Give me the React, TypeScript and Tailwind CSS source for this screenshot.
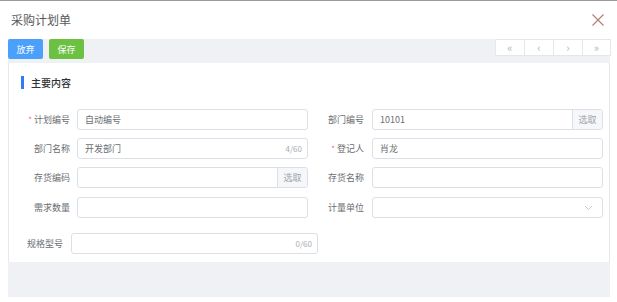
import React from "react";

const font = { fontFamily: '"Noto Sans CJK SC", "Noto Sans", sans-serif' };

function Label({ text, req, w }: { text: string; req?: boolean; w: string }) {
  return (
    <div className={`${w} shrink-0 flex items-center justify-end text-[9px] text-[#6b6d72] leading-none`}>
      {req && <span className="text-[#f56c6c] text-[8px] mr-[2px]">*</span>}
      {text}
    </div>
  );
}

function Input({ value, count, append, select, w }: { value?: string; count?: string; append?: boolean; select?: boolean; w: string }) {
  return (
    <div className={`${w} h-[21px] shrink-0 flex border border-[#dcdfe6] rounded-[3px] bg-white overflow-hidden`}>
      <div className="flex-1 flex items-center pl-[7px] pr-[5px] text-[9px] text-[#6b6d72] leading-none">
        <span className="flex-1">{value}</span>
        {count && <span className="text-[8px] text-[#a8abb2]">{count}</span>}
        {select && (
          <svg width="9" height="6" viewBox="0 0 9 6" className="mr-[4px]">
            <path d="M1 1 L4.5 4.5 L8 1" fill="none" stroke="#c0c4cc" strokeWidth="0.9" />
          </svg>
        )}
      </div>
      {append && (
        <div className="w-[30px] border-l border-[#dcdfe6] bg-[#f5f7fa] flex items-center justify-center text-[9px] text-[#a0a3a8] leading-none">
          选取
        </div>
      )}
    </div>
  );
}

function Pager({ children, last }: { children: React.ReactNode; last?: boolean }) {
  return (
    <div className={`w-[29px] h-[17px] bg-white border-t border-b border-l ${last ? "border-r" : ""} border-[#e4e7ed] flex items-center justify-center text-[11px] text-[#b0b3b8] leading-none pb-[1px]`}>
      {children}
    </div>
  );
}

export default function App() {
  return (
    <div className="w-[617px] h-[302px] bg-white border-t border-[#9a9a9a] overflow-hidden" style={font}>
      <div className="h-[38px] flex items-center justify-between pl-[11px] pr-[13px]">
        <span className="text-[12px] text-[#585858] leading-none">采购计划单</span>
        <svg width="12" height="12" viewBox="0 0 12 12">
          <path d="M0.5 0.5 L11.5 11.5 M11.5 0.5 L0.5 11.5" stroke="#b87c7a" strokeWidth="1.2" />
        </svg>
      </div>
      <div className="ml-[8px] w-[602px] bg-[#f0f1f5]">
        <div className="h-[24px] flex items-start justify-between">
          <div className="flex gap-[6px]">
            <div className="w-[35px] h-[20px] rounded-[2px] bg-[#4aa0fb] text-white text-[9px] flex items-center justify-center leading-none">放弃</div>
            <div className="w-[35px] h-[20px] rounded-[2px] bg-[#6cc142] text-white text-[9px] flex items-center justify-center leading-none">保存</div>
          </div>
          <div className="flex mr-[-1px]">
            <Pager>«</Pager>
            <Pager>‹</Pager>
            <Pager>›</Pager>
            <Pager last>»</Pager>
          </div>
        </div>
        <div className="h-[199px] bg-white border-l border-r border-[#e8e8ec] pt-[13px]">
          <div className="flex items-center pl-[12px] h-[13px]">
            <div className="w-[3px] h-[13px] bg-[#2f7cf6]" />
            <span className="ml-[7px] text-[10px] text-[#303133] font-medium leading-none">主要内容</span>
          </div>
          <div className="mt-[20px] flex">
            <Label w="w-[61px]" text="计划编号" req />
            <div className="w-[7px]" />
            <Input w="w-[231px]" value="自动编号" />
            <Label w="w-[56px]" text="部门编号" />
            <div className="w-[8px]" />
            <Input w="w-[231px]" value="10101" append />
          </div>
          <div className="mt-[8px] flex">
            <Label w="w-[61px]" text="部门名称" />
            <div className="w-[7px]" />
            <Input w="w-[231px]" value="开发部门" count="4/60" />
            <Label w="w-[56px]" text="登记人" req />
            <div className="w-[8px]" />
            <Input w="w-[231px]" value="肖龙" />
          </div>
          <div className="mt-[8px] flex">
            <Label w="w-[61px]" text="存货编码" />
            <div className="w-[7px]" />
            <Input w="w-[231px]" append />
            <Label w="w-[56px]" text="存货名称" />
            <div className="w-[8px]" />
            <Input w="w-[231px]" />
          </div>
          <div className="mt-[9px] flex">
            <Label w="w-[61px]" text="需求数量" />
            <div className="w-[7px]" />
            <Input w="w-[231px]" />
            <Label w="w-[56px]" text="计量单位" />
            <div className="w-[8px]" />
            <Input w="w-[231px]" select />
          </div>
          <div className="mt-[15px] flex">
            <Label w="w-[54px]" text="规格型号" />
            <div className="w-[8px]" />
            <Input w="w-[247px]" count="0/60" />
          </div>
        </div>
        <div className="h-[35px]" />
      </div>
    </div>
  );
}
